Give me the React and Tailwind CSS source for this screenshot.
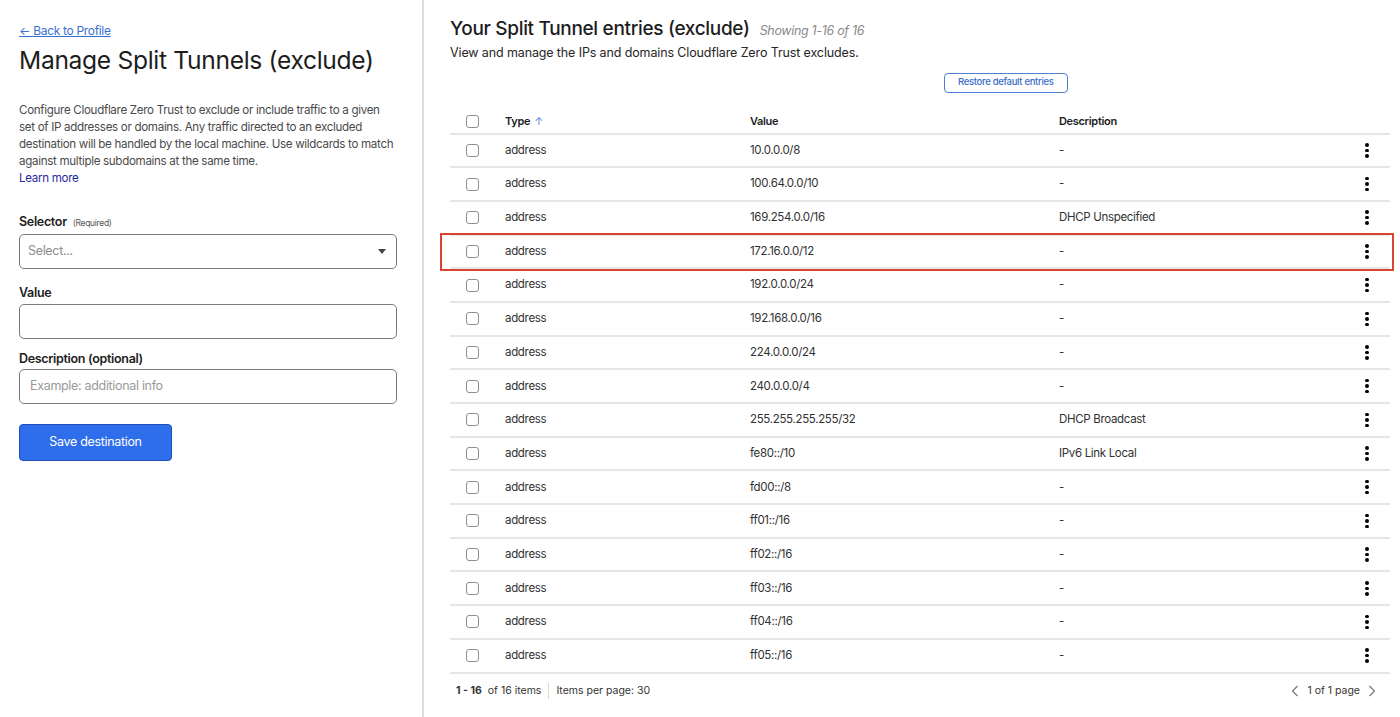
const rows = [
  ['10.0.0.0/8', '-'],
  ['100.64.0.0/10', '-'],
  ['169.254.0.0/16', 'DHCP Unspecified'],
  ['172.16.0.0/12', '-'],
  ['192.0.0.0/24', '-'],
  ['192.168.0.0/16', '-'],
  ['224.0.0.0/24', '-'],
  ['240.0.0.0/4', '-'],
  ['255.255.255.255/32', 'DHCP Broadcast'],
  ['fe80::/10', 'IPv6 Link Local'],
  ['fd00::/8', '-'],
  ['ff01::/16', '-'],
  ['ff02::/16', '-'],
  ['ff03::/16', '-'],
  ['ff04::/16', '-'],
  ['ff05::/16', '-'],
]

const Checkbox = () => (
  <span className="block h-[13px] w-[13px] rounded-[3px] border border-[#8e8e8e] bg-white" />
)

const Kebab = () => (
  <span className="flex flex-col items-center gap-[2px]">
    <span className="h-[3.5px] w-[3.5px] rounded-full bg-black" />
    <span className="h-[3.5px] w-[3.5px] rounded-full bg-black" />
    <span className="h-[3.5px] w-[3.5px] rounded-full bg-black" />
  </span>
)

const Row = ({ value, desc, highlight }) => (
  <div className="relative flex h-[33.7px] items-center border-b-2 border-[#e6e6e6] text-[11.5px] text-[#313131]">
    {highlight && (
      <div className="pointer-events-none absolute -top-[3px] -bottom-[4px] -left-[10px] -right-[4px] border-2 border-[#d9432f]" />
    )}
    <div className="w-[55px] pl-[16px]"><Checkbox /></div>
    <div className="w-[245px]">address</div>
    <div className="w-[309px]">{value}</div>
    <div className="flex-1">{desc}</div>
    <div className="flex w-[46px] justify-center"><Kebab /></div>
  </div>
)

const App = () => {
  return (
    <div className="flex h-[717px] w-[1400px] bg-white font-['Inter',sans-serif] tracking-[-0.02em] text-[#1d1d1d]">
      {/* left form */}
      <aside className="w-[424px] shrink-0 border-r-2 border-[#dcdcdc] px-[19px] pt-[23px]">
        <a href="#" className="block text-[12px] leading-[16px] text-[#3b6fd4] underline">← Back to Profile</a>
        <h1 className="mt-[4px] whitespace-nowrap text-[24.6px] leading-[34px] text-[#1d1d1d]">Manage Split Tunnels (exclude)</h1>
        <p className="mt-[25px] whitespace-nowrap text-[11.6px] leading-[17px] text-[#4a4a4a]">
          Configure Cloudflare Zero Trust to exclude or include traffic to a given<br />
          set of IP addresses or domains. Any traffic directed to an excluded<br />
          destination will be handled by the local machine. Use wildcards to match<br />
          against multiple subdomains at the same time.
        </p>
        <a href="#" className="block text-[11.6px] leading-[17px] text-[#1f2aa0]">Learn more</a>

        <div className="mt-[26px] flex items-baseline gap-[6px]">
          <span className="text-[12.5px] font-semibold">Selector</span>
          <span className="text-[8.5px] text-[#555]">(Required)</span>
        </div>
        <div className="mt-[2px] flex h-[35px] w-[378px] items-center justify-between rounded-[5px] border border-[#7a7a7a] px-[8px]">
          <span className="text-[12.5px] text-[#8e8e8e]">Select...</span>
          <span className="mr-[2px] h-0 w-0 border-x-[4px] border-t-[5px] border-x-transparent border-t-[#444]" />
        </div>

        <div className="mt-[15px] text-[12.5px] font-semibold">Value</div>
        <div className="mt-[1px] h-[35px] w-[378px] rounded-[5px] border border-[#7a7a7a]" />

        <div className="mt-[11px] text-[12.5px] font-semibold">Description (optional)</div>
        <div className="mt-[1px] flex h-[35px] w-[378px] items-center rounded-[5px] border border-[#7a7a7a] px-[10px]">
          <span className="text-[12.5px] text-[#999]">Example: additional info</span>
        </div>

        <button className="mt-[20px] h-[37px] w-[153px] rounded-[4px] border border-[#1d4fb8] bg-[#2f6eeb] text-[12.5px] text-white">
          Save destination
        </button>
      </aside>

      {/* right table */}
      <main className="flex-1 pl-[26px] pr-[10px] pt-[15px]">
        <div className="flex items-baseline gap-[10px]">
          <h2 className="text-[19px] font-medium text-[#1d1d1d]">Your Split Tunnel entries (exclude)</h2>
          <span className="text-[12.5px] italic text-[#8a8a8a]">Showing 1-16 of 16</span>
        </div>
        <p className="mt-[1px] text-[12.5px] leading-[16px] tracking-[-0.01em] text-[#262626]">View and manage the IPs and domains Cloudflare Zero Trust excludes.</p>

        <div className="mt-[12px] flex pl-[494px]">
          <button className="h-[20px] rounded-[4px] border border-[#4d7fd6] px-[13px] text-[9.5px] font-medium text-[#3b6bc9]">
            Restore default entries
          </button>
        </div>

        <div className="mt-[17px] w-[940px]">
          <div className="flex h-[25px] items-center border-b-2 border-[#e6e6e6] text-[11px] font-semibold text-[#1d1d1d]">
            <div className="w-[55px] pl-[16px]"><Checkbox /></div>
            <div className="flex w-[245px] items-center gap-[4px]">
              Type <span className="text-[11px] font-normal text-[#5b8be0]">↑</span>
            </div>
            <div className="w-[309px]">Value</div>
            <div className="flex-1">Description</div>
          </div>
          {rows.map(([value, desc], i) => (
            <Row key={value} value={value} desc={desc} highlight={i === 3} />
          ))}
          <div className="flex h-[34px] items-center justify-between text-[10.5px] tracking-normal text-[#333]">
            <div className="flex items-center pl-[6px]">
              <span className="font-bold">1 - 16</span>
              <span className="ml-[6px]">of 16 items</span>
              <span className="mx-[7px] h-[16px] w-px bg-[#d8d8d8]" />
              <span>Items per page: 30</span>
            </div>
            <div className="flex items-center gap-[8px] pr-[14px]">
              <svg width="8" height="12" viewBox="0 0 8 12" fill="none" stroke="#777" strokeWidth="1.2"><path d="M6.5 1L1.5 6l5 5" /></svg>
              <span>1 of 1 page</span>
              <svg width="8" height="12" viewBox="0 0 8 12" fill="none" stroke="#777" strokeWidth="1.2"><path d="M1.5 1l5 5-5 5" /></svg>
            </div>
          </div>
        </div>
      </main>
    </div>
  )
}

export default App
